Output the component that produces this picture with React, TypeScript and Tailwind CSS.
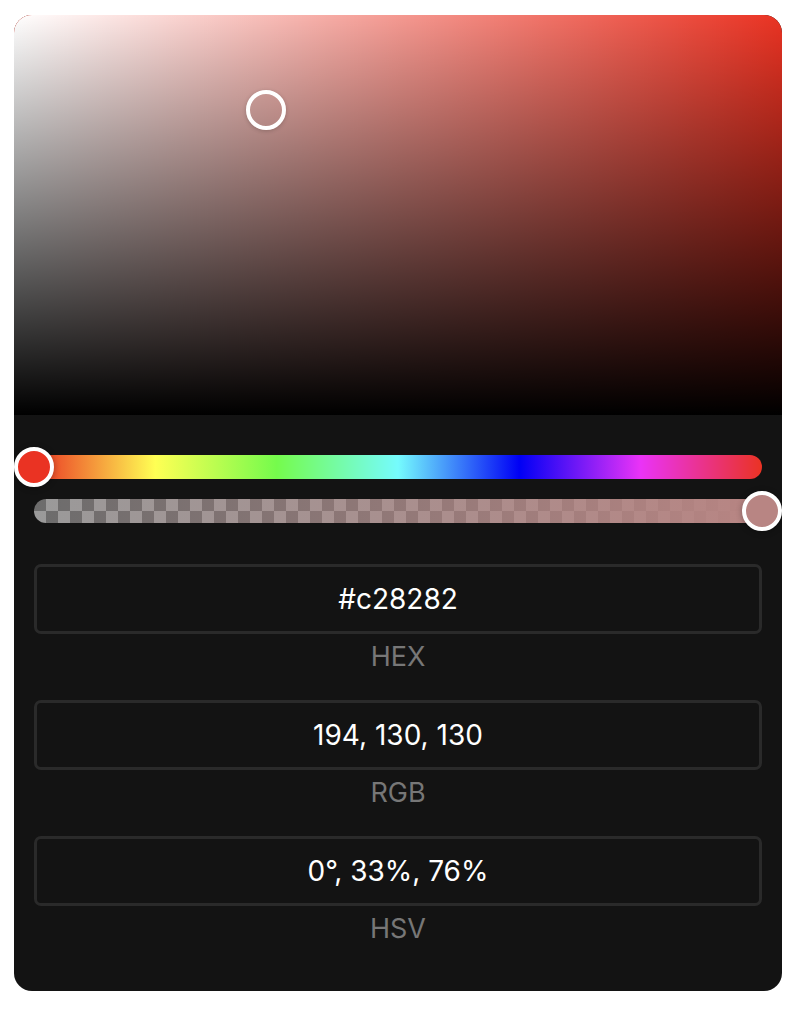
import React from "react";

function Field({ value, label }: { value: string; label: string }) {
  return (
    <div className="flex flex-col">
      <div className="h-[70px] rounded-[7px] border-[3px] border-[#2a2a2a] bg-[#131313] flex items-center justify-center text-white text-[28px] font-[Inter,'Liberation_Sans',sans-serif]">
        {value}
      </div>
      <div className="h-[46px] flex items-center justify-center text-[#777777] text-[27px] font-[Inter,'Liberation_Sans',sans-serif]">
        {label}
      </div>
    </div>
  );
}

export default function App() {
  return (
    <div className="min-h-[1012px] w-[802px] bg-white pt-[15px] pl-[14px]">
      <div className="w-[768px] h-[976px] rounded-[18px] overflow-hidden bg-[#131313] flex flex-col">
        <div className="relative h-[400px] bg-[#ea3323]">
          <div className="w-full h-full bg-[linear-gradient(to_right,#ffffff,rgba(255,255,255,0))]">
            <div className="w-full h-full bg-[linear-gradient(to_top,#000000,rgba(0,0,0,0))]" />
          </div>
          <div className="absolute left-[232px] top-[75px] w-[40px] h-[40px] rounded-full border-[4px] border-white shadow-[0_1px_4px_rgba(0,0,0,0.2)]" />
        </div>
        <div className="px-[20px] pt-[40px] flex flex-col gap-[20px]">
          <div className="relative h-[24px] rounded-full bg-[linear-gradient(to_right,#ea3323_0%,#ffff54_16.67%,#75fb4c_33.33%,#75fbfd_50%,#0000f5_66.67%,#ea33f7_83.33%,#ea3323_100%)]">
            <div className="absolute left-[-20px] top-[-8px] w-[40px] h-[40px] rounded-full border-[4px] border-white bg-[#ea3323] shadow-[0_1px_6px_rgba(0,0,0,0.3)]" />
          </div>
          <div className="relative h-[24px] rounded-full bg-[conic-gradient(#9a9a9a_0_25%,#6c6c6c_0_50%,#9a9a9a_0_75%,#6c6c6c_0)] bg-[length:24px_24px]">
            <div className="w-full h-full rounded-full bg-[linear-gradient(to_right,rgba(184,133,131,0),#b88583)]" />
            <div className="absolute right-[-20px] top-[-8px] w-[40px] h-[40px] rounded-full border-[4px] border-white bg-[#b88583] shadow-[0_1px_6px_rgba(0,0,0,0.3)]" />
          </div>
        </div>
        <div className="px-[20px] pt-[41px] flex flex-col gap-[20px]">
          <Field value="#c28282" label="HEX" />
          <Field value="194, 130, 130" label="RGB" />
          <Field value="0°, 33%, 76%" label="HSV" />
        </div>
      </div>
    </div>
  );
}
